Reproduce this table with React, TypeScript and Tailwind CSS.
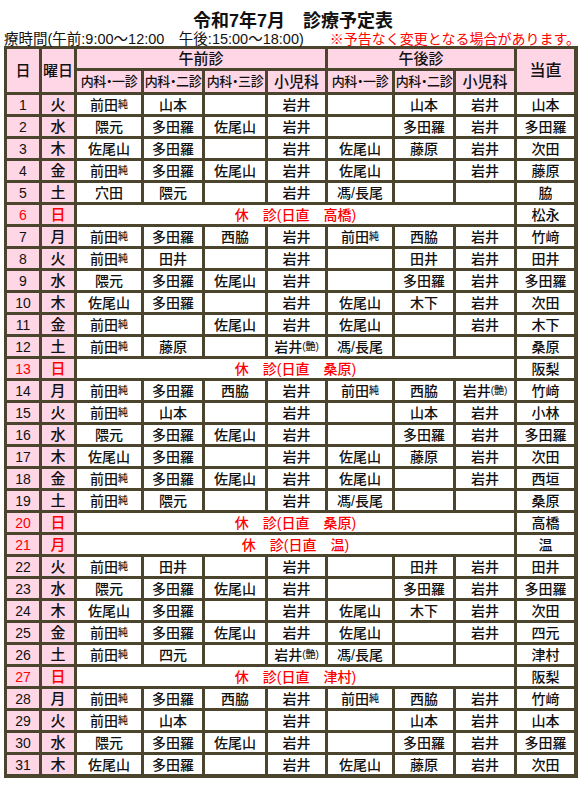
// Schedule sheet for July (令和7年7月 診療予定表)

const FONT = "font-['Liberation_Sans','Noto_Sans_CJK_JP',sans-serif]";

type Row = {
    day: number;
    week: string;
    cells?: string[];
    holiday?: string;
    duty: string;
};

const rows: Row[] = [
    { day: 1, week: "火", cells: ["前田純", "山本", "", "岩井", "", "山本", "岩井"], duty: "山本" },
    { day: 2, week: "水", cells: ["隈元", "多田羅", "佐尾山", "岩井", "", "多田羅", "岩井"], duty: "多田羅" },
    { day: 3, week: "木", cells: ["佐尾山", "多田羅", "", "岩井", "佐尾山", "藤原", "岩井"], duty: "次田" },
    { day: 4, week: "金", cells: ["前田純", "多田羅", "佐尾山", "岩井", "佐尾山", "", "岩井"], duty: "藤原" },
    { day: 5, week: "土", cells: ["穴田", "隈元", "", "岩井", "馮/長尾", "", ""], duty: "脇" },
    { day: 6, week: "日", holiday: "高橋", duty: "松永" },
    { day: 7, week: "月", cells: ["前田純", "多田羅", "西脇", "岩井", "前田純", "西脇", "岩井"], duty: "竹﨑" },
    { day: 8, week: "火", cells: ["前田純", "田井", "", "岩井", "", "田井", "岩井"], duty: "田井" },
    { day: 9, week: "水", cells: ["隈元", "多田羅", "佐尾山", "岩井", "", "多田羅", "岩井"], duty: "多田羅" },
    { day: 10, week: "木", cells: ["佐尾山", "多田羅", "", "岩井", "佐尾山", "木下", "岩井"], duty: "次田" },
    { day: 11, week: "金", cells: ["前田純", "", "佐尾山", "岩井", "佐尾山", "", "岩井"], duty: "木下" },
    { day: 12, week: "土", cells: ["前田純", "藤原", "", "岩井艶", "馮/長尾", "", ""], duty: "桑原" },
    { day: 13, week: "日", holiday: "桑原", duty: "阪梨" },
    { day: 14, week: "月", cells: ["前田純", "多田羅", "西脇", "岩井", "前田純", "西脇", "岩井艶"], duty: "竹﨑" },
    { day: 15, week: "火", cells: ["前田純", "山本", "", "岩井", "", "山本", "岩井"], duty: "小林" },
    { day: 16, week: "水", cells: ["隈元", "多田羅", "佐尾山", "岩井", "", "多田羅", "岩井"], duty: "多田羅" },
    { day: 17, week: "木", cells: ["佐尾山", "多田羅", "", "岩井", "佐尾山", "藤原", "岩井"], duty: "次田" },
    { day: 18, week: "金", cells: ["前田純", "多田羅", "佐尾山", "岩井", "佐尾山", "", "岩井"], duty: "西垣" },
    { day: 19, week: "土", cells: ["前田純", "隈元", "", "岩井", "馮/長尾", "", ""], duty: "桑原" },
    { day: 20, week: "日", holiday: "桑原", duty: "高橋" },
    { day: 21, week: "月", holiday: "温", duty: "温" },
    { day: 22, week: "火", cells: ["前田純", "田井", "", "岩井", "", "田井", "岩井"], duty: "田井" },
    { day: 23, week: "水", cells: ["隈元", "多田羅", "佐尾山", "岩井", "", "多田羅", "岩井"], duty: "多田羅" },
    { day: 24, week: "木", cells: ["佐尾山", "多田羅", "", "岩井", "佐尾山", "木下", "岩井"], duty: "次田" },
    { day: 25, week: "金", cells: ["前田純", "多田羅", "佐尾山", "岩井", "佐尾山", "", "岩井"], duty: "四元" },
    { day: 26, week: "土", cells: ["前田純", "四元", "", "岩井艶", "馮/長尾", "", ""], duty: "津村" },
    { day: 27, week: "日", holiday: "津村", duty: "阪梨" },
    { day: 28, week: "月", cells: ["前田純", "多田羅", "西脇", "岩井", "前田純", "西脇", "岩井"], duty: "竹﨑" },
    { day: 29, week: "火", cells: ["前田純", "山本", "", "岩井", "", "山本", "岩井"], duty: "山本" },
    { day: 30, week: "水", cells: ["隈元", "多田羅", "佐尾山", "岩井", "", "多田羅", "岩井"], duty: "多田羅" },
    { day: 31, week: "木", cells: ["佐尾山", "多田羅", "", "岩井", "佐尾山", "藤原", "岩井"], duty: "次田" },
];

function Name({ value }: { value: string }) {
    if (value === "前田純") {
        return (
            <>
                前田<span className="text-[10px]">純</span>
            </>
        );
    }
    if (value === "岩井艶") {
        return (
            <>
                岩井<span className="text-[10px]">(艶)</span>
            </>
        );
    }
    return <>{value}</>;
}

const pinkCell = "flex items-center justify-center bg-[#fed6e6]";
const whiteCell = "flex items-center justify-center bg-white";
const subHead = `${pinkCell} text-[13px] whitespace-nowrap tracking-[-0.4px] [font-feature-settings:'palt']`;

export default function App() {
    return (
        <div className={`${FONT} w-[586px] h-[788px] bg-white text-[#111111]`}>
            <div className="pt-[9px] h-[33px] text-center text-[18px] leading-[24px] font-bold">
                令和7年7月　診療予定表
            </div>
            <div className="flex justify-between items-end h-[13px] pl-[4px] pr-[6px] text-[14.5px] leading-[13px] whitespace-nowrap">
                <span>療時間(午前:9:00～12:00　午後:15:00～18:00)</span>
                <span className="text-[14px] text-[#ff0000]">※予告なく変更となる場合があります。</span>
            </div>

            <div className="ml-[4px] w-fit grid grid-cols-[32px_32px_64px_58px_60px_57px_64px_58px_58px_57px] grid-rows-[19px_21px_repeat(31,19px)] gap-[3px] bg-[#4b452e] pt-[3px] pl-[3px] pr-[4px] pb-[4px] text-[14px] leading-none font-medium">
                <div className={`${pinkCell} row-span-2 text-[15px]`}>日</div>
                <div className={`${pinkCell} row-span-2 text-[15px]`}>曜日</div>
                <div className={`${pinkCell} col-span-4 text-[15px]`}>午前診</div>
                <div className={`${pinkCell} col-span-3 text-[15px]`}>午後診</div>
                <div className={`${pinkCell} row-span-2 text-[16px]`}>当直</div>

                <div className={subHead}>内科・一診</div>
                <div className={subHead}>内科・二診</div>
                <div className={subHead}>内科・三診</div>
                <div className={`${pinkCell} text-[15px]`}>小児科</div>
                <div className={subHead}>内科・一診</div>
                <div className={subHead}>内科・二診</div>
                <div className={`${pinkCell} text-[15px]`}>小児科</div>

                {rows.map((row) => {
                    const red = row.holiday ? "text-[#ff0000]" : "";
                    return (
                        <div key={row.day} className="contents">
                            <div className={`${pinkCell} ${red}`}>{row.day}</div>
                            <div className={`${pinkCell} ${red} text-[15px]`}>{row.week}</div>
                            {row.holiday ? (
                                <div className={`${whiteCell} col-span-7 text-[#ff0000]`}>
                                    休　診(日直　{row.holiday})
                                </div>
                            ) : (
                                row.cells!.map((c, i) => (
                                    <div key={i} className={whiteCell}>
                                        <Name value={c} />
                                    </div>
                                ))
                            )}
                            <div className={whiteCell}>{row.duty}</div>
                        </div>
                    );
                })}
            </div>
        </div>
    );
}
